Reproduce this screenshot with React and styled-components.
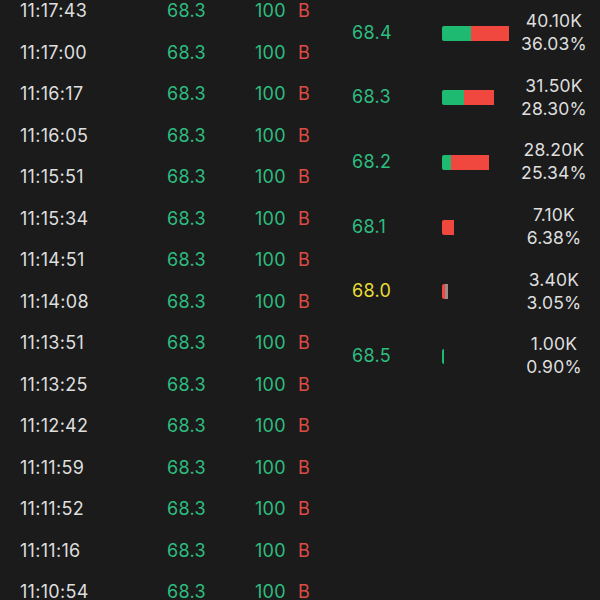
import React from "react";
import styled, { createGlobalStyle } from "styled-components";

const Global = createGlobalStyle`
  html, body { margin: 0; padding: 0; background: #1b1b1b; }
  body { font-family: Inter, "Noto Sans", "Liberation Sans", sans-serif; overflow: hidden; }
`;

const Page = styled.div`
  width: 600px;
  height: 600px;
  overflow: hidden;
  background: #1b1b1b;
  display: grid;
  grid-template-columns: 340px 260px;
`;

const TradeList = styled.div`
  margin-top: -10px;
  display: flex;
  flex-direction: column;
`;

const TradeRow = styled.div`
  height: 41.5px;
  flex-shrink: 0;
  display: grid;
  grid-template-columns: 147px 88px 43px auto;
  align-items: center;
  padding-left: 20px;
  font-size: 18px;
  letter-spacing: 0.3px;
`;

const Time = styled.span`
  color: #dedede;
`;

const Green = styled.span`
  color: #2ebd80;
`;

const Side = styled.span`
  color: #dc4c45;
`;

const Depth = styled.div`
  display: flex;
  flex-direction: column;
  padding: 0 8px 0 12px;
`;

const DepthRow = styled.div`
  height: 64.6px;
  display: grid;
  grid-template-columns: 90px 74px 76px;
  align-items: center;
`;

const Price = styled.span`
  font-size: 18px;
  letter-spacing: 0.3px;
  color: ${(p) => (p.$yellow ? "#e8dc33" : "#2ebd80")};
`;

const Bar = styled.div`
  display: flex;
  height: 15px;
  border-radius: 2px;
  overflow: hidden;
  margin-top: 2px;
`;

const Seg = styled.div`
  height: 100%;
  background: ${(p) => p.$c};
`;

const Values = styled.div`
  display: flex;
  flex-direction: column;
  align-items: center;
  font-size: 17.5px;
  letter-spacing: 0.2px;
  line-height: 23px;
  color: #dedede;
`;

const trades = [
  "11:17:43", "11:17:00", "11:16:17", "11:16:05", "11:15:51", "11:15:34",
  "11:14:51", "11:14:08", "11:13:51", "11:13:25", "11:12:42", "11:11:59",
  "11:11:52", "11:11:16", "11:10:54",
];

const G = "#1fba72";
const R = "#f0473f";
const depth = [
  { p: "68.4", segs: [[G, 29], [R, 38]], v: "40.10K", pct: "36.03%" },
  { p: "68.3", segs: [[G, 22], [R, 30]], v: "31.50K", pct: "28.30%" },
  { p: "68.2", segs: [[G, 9], [R, 38]], v: "28.20K", pct: "25.34%" },
  { p: "68.1", segs: [[R, 12]], v: "7.10K", pct: "6.38%" },
  { p: "68.0", yellow: true, segs: [[R, 3], ["#9a8a8a", 3]], v: "3.40K", pct: "3.05%" },
  { p: "68.5", segs: [[G, 2]], v: "1.00K", pct: "0.90%" },
];

export default function App() {
  return (
    <>
      <Global />
      <Page>
        <TradeList>
          {trades.map((t) => (
            <TradeRow key={t}>
              <Time>{t}</Time>
              <Green>68.3</Green>
              <Green>100</Green>
              <Side>B</Side>
            </TradeRow>
          ))}
        </TradeList>
        <Depth>
          {depth.map((d) => (
            <DepthRow key={d.p}>
              <Price $yellow={d.yellow}>{d.p}</Price>
              <div>
                <Bar>
                  {d.segs.map(([c, w], i) => (
                    <Seg key={i} $c={c} style={{ width: w }} />
                  ))}
                </Bar>
              </div>
              <Values>
                <span>{d.v}</span>
                <span>{d.pct}</span>
              </Values>
            </DepthRow>
          ))}
        </Depth>
      </Page>
    </>
  );
}
